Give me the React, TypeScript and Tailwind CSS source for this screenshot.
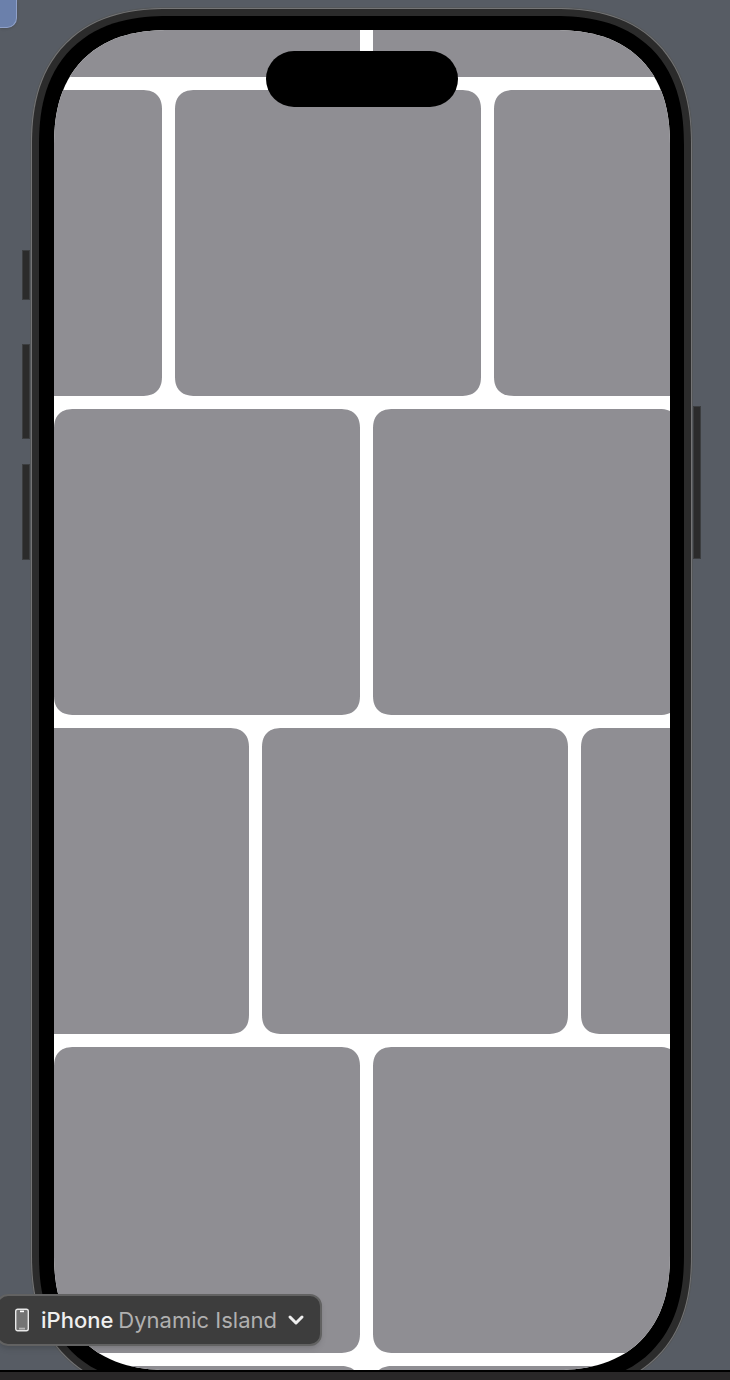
import { ChevronDown } from "lucide-react";

const rows = [
  { shift: "ml-0", count: 2 },
  { shift: "-ml-[198px]", count: 3 },
  { shift: "ml-0", count: 2 },
  { shift: "-ml-[111px]", count: 3 },
  { shift: "ml-0", count: 2 },
  { shift: "ml-0", count: 2 },
];

function TileRow({ shift, count }: { shift: string; count: number }) {
  return (
    <div className={`flex gap-[13px] ${shift}`}>
      {Array.from({ length: count }, (_, i) => (
        <div
          key={i}
          className="size-[306px] shrink-0 rounded-[20px] bg-[#8f8e93] [corner-shape:superellipse(1.3)]"
        />
      ))}
    </div>
  );
}

function PhoneGlyph() {
  return (
    <svg viewBox="0 0 16 24" className="h-6 w-4" fill="none" aria-hidden="true">
      <rect x="1.7" y="1.2" width="12.6" height="21.6" rx="2" fill="#747474" stroke="#e8e8e8" strokeWidth="1.4" />
      <path d="M6 3.4h4" stroke="#fff" strokeWidth="1.6" />
      <path d="M5 20.6h6" stroke="#b5b5b5" strokeWidth="1.8" />
    </svg>
  );
}

export default function App() {
  return (
    <div className="flex h-screen flex-col overflow-hidden bg-[#292728] font-[Inter,'Liberation_Sans',sans-serif]">
      <main className="relative min-h-0 flex-1 overflow-hidden border-b-2 border-black bg-[#575c64] pt-[7px] pr-[37px] pl-[30px]">
        <div className="absolute top-0 left-0 h-7 w-[17px] rounded-br-[10px] border-r border-b border-[#8fa0c8] bg-[#6b80ab] shadow" />
        <div className="relative">
          <div className="absolute top-[243px] -left-2 h-[50px] w-2 border border-[#3c3e40] bg-[#2b2b2b]" />
          <div className="absolute top-[337px] -left-2 h-[95px] w-2 border border-[#3c3e40] bg-[#2b2b2b]" />
          <div className="absolute top-[457px] -left-2 h-[96px] w-2 border border-[#3c3e40] bg-[#2b2b2b]" />
          <div className="absolute top-[399px] -right-2 h-[153px] w-2 border border-[#3c3e40] bg-[#2b2b2b]" />
          <div className="rounded-[138px] border border-[#54575a] bg-[#747475] p-px [corner-shape:superellipse(1.25)]">
            <div className="rounded-[136px] bg-[#2b2b2b] p-[7px] [corner-shape:superellipse(1.25)]">
              <div className="rounded-[129px] bg-black py-[14px] pr-[14px] pl-[15px] [corner-shape:superellipse(1.25)]">
                <div className="relative h-[1340px] overflow-hidden rounded-[116px] bg-white [corner-shape:superellipse(1.25)]">
                  <div className="-mt-[259px] flex flex-col gap-[13px]">
                    {rows.map((row, i) => (
                      <TileRow key={i} {...row} />
                    ))}
                  </div>
                  <div className="absolute top-[21px] left-1/2 h-14 w-48 -translate-x-1/2 rounded-full bg-black" />
                </div>
              </div>
            </div>
          </div>
        </div>
        <button
          type="button"
          className="absolute bottom-6 -left-1 flex h-[52px] items-center rounded-xl border-2 border-[#626262] bg-[#3d3d3d] pr-3 pl-4 text-[22px] whitespace-nowrap text-[#b0b0b0] shadow-md"
        >
          <PhoneGlyph />
          <span className="ml-[11px] font-medium text-[#efefef]">iPhone</span>
          <span className="ml-[5px]">Dynamic Island</span>
          <ChevronDown className="ml-[7px] size-6 text-[#efefef]" strokeWidth={3} aria-hidden="true" />
        </button>
      </main>
      <footer className="h-2 shrink-0 bg-[#292728]" />
    </div>
  );
}
